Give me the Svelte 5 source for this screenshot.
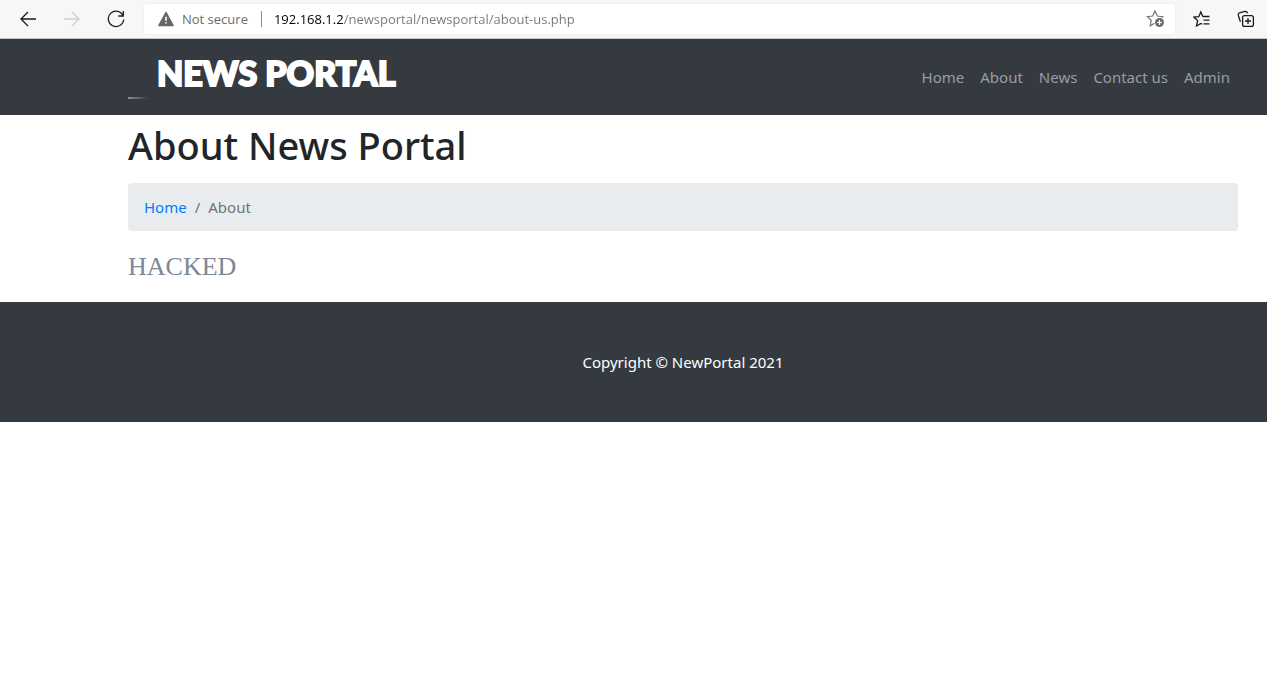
<script>
  const links = ['Home', 'About', 'News', 'Contact us', 'Admin'];
  let address = $state('192.168.1.2/newsportal/newsportal/about-us.php');
</script>

<div class="toolbar">
  <div class="history">
    <button aria-label="Back">
      <svg width="18" height="18" viewBox="0 0 18 18"><path d="M9 2 2 9l7 7M2 9h15" /></svg>
    </button>
    <button aria-label="Forward" disabled>
      <svg width="18" height="18" viewBox="0 0 18 18"><path d="m9 2 7 7-7 7M16 9H1" /></svg>
    </button>
    <button aria-label="Refresh">
      <svg width="18" height="18" viewBox="0 0 18 18"><path d="M16.2 6A7.7 7.7 0 1 0 16.7 9.5M16.3 1v5h-5" /></svg>
    </button>
  </div>
  <form class="address" onsubmit={(e) => e.preventDefault()}>
    <svg class="warning" width="16" height="16" viewBox="0 0 16 16">
      <path class="triangle" d="M8 1.2 15.2 14.5H.8Z" />
      <path class="mark" d="M8 5.8v4M8 11v1.6" />
    </svg>
    <label for="url">Not secure</label>
    <input id="url" type="text" spellcheck="false" bind:value={address} />
    <button type="button" class="favorite" aria-label="Add to favorites">
      <svg width="20" height="20" viewBox="0 0 20 20">
        <path d="m9 2 2.3 5 5.4.6-4 3.6 1 5.4L9 14l-4.8 2.8 1-5.6-4-3.6 5.5-.6Z" />
        <circle class="halo" cx="13.5" cy="13.5" r="5.4" />
        <circle class="disc" cx="13.5" cy="13.5" r="4.5" />
        <path class="plus" d="M11 13.5h5M13.5 11v5" />
      </svg>
    </button>
  </form>
  <div class="tools">
    <button aria-label="Favorites">
      <svg width="18" height="18" viewBox="0 0 18 18">
        <path d="M9.8 6.5 7.8 2 5.8 6.7l-5 .4 3.8 3.5L3.5 16l4.3-2.6 1.4.8M9.8 6.5h6.7M10.5 10.2h6M10.5 13.8h6" />
      </svg>
    </button>
    <button aria-label="Collections">
      <svg width="18" height="18" viewBox="0 0 18 18">
        <path d="M3.4 11.7 1.3 5.2Q.8 3.5 2.5 2.9L8 1.4Q9.7 1 10.6 3.3" />
        <rect x="5.6" y="5.6" width="10.8" height="10.8" rx="2" />
        <path d="M8 11h6M11 8v6" />
      </svg>
    </button>
  </div>
</div>

<nav class="navbar">
  <div class="container bar">
    <a class="brand" href="#home">NEWS PORTAL</a>
    <ul>
      {#each links as link}
        <li><a href="#{link}">{link}</a></li>
      {/each}
    </ul>
  </div>
</nav>

<main class="container">
  <h1>About News Portal</h1>
  <ol class="breadcrumb">
    <li><a href="#home">Home</a></li>
    <li>About</li>
  </ol>
  <p class="message">HACKED</p>
</main>

<footer>
  <p class="container">Copyright © NewPortal 2021</p>
</footer>

<style>
  :global(body) {
    margin: 0;
    background: #fff;
    color: #212529;
    font: 15px/24px "Noto Sans", "Open Sans", sans-serif;
  }
  button {
    display: grid;
    place-items: center;
    border: 0;
    padding: 0;
    background: none;
    color: #1b1b1b;
  }
  button:disabled {
    color: #cfcfcf;
  }
  svg {
    fill: none;
    stroke: currentColor;
    stroke-width: 1.3;
    flex: none;
  }
  .toolbar {
    display: flex;
    align-items: center;
    box-sizing: border-box;
    height: 39px;
    border-bottom: 1px solid #c2c4c5;
    background: #f7f7f7;
    font-family: "Open Sans", "Noto Sans", sans-serif;
    font-size: 13px;
  }
  .history,
  .tools {
    display: flex;
  }
  .history {
    padding-left: 6px;
  }
  .tools {
    gap: 2px;
  }
  .history button {
    width: 44px;
    height: 32px;
  }
  .tools button {
    width: 42px;
    height: 32px;
  }
  .address {
    flex: 1;
    display: flex;
    align-items: center;
    min-width: 0;
    height: 30px;
    margin: 0 6px;
    padding: 0 8px 0 14px;
    border-radius: 4px;
    background: #fff;
    box-shadow: 0 0 3px #0001;
    color: #6b6b6b;
  }
  .triangle {
    fill: #666;
    stroke: #666;
    stroke-linejoin: round;
  }
  .mark {
    stroke: #fff;
    stroke-width: 1.6;
  }
  label {
    margin-left: 8px;
    padding-right: 13px;
    border-right: 1px solid #8a8a8a;
    line-height: 16px;
    white-space: nowrap;
  }
  input {
    flex: 1;
    min-width: 0;
    border: 0;
    padding: 0;
    margin-left: 12px;
    outline: 0;
    color: transparent;
    caret-color: #000;
    font: inherit;
    background: linear-gradient(90deg, #000 69px, #767676 69px);
    -webkit-background-clip: text;
    background-clip: text;
  }
  .favorite {
    width: 22px;
    height: 24px;
    color: #767676;
  }
  .favorite svg {
    stroke-width: 1.2;
  }
  .halo {
    fill: #fff;
    stroke: none;
  }
  .disc {
    fill: #6b6b6b;
    stroke: none;
  }
  .plus {
    stroke: #fff;
  }
  .container {
    padding: 0 29px 0 128px;
  }
  .navbar,
  footer {
    background: #343a40;
  }
  .bar {
    display: flex;
    align-items: center;
    justify-content: space-between;
    height: 76px;
  }
  .brand {
    display: flex;
    align-items: center;
    box-sizing: border-box;
    height: 52px;
    padding: 0 0 8px 29px;
    background: linear-gradient(90deg, #8d9093, transparent) 0 46px / 20px 2px no-repeat;
    color: #fff;
    font: 900 34px/40px Lato, sans-serif;
    -webkit-text-stroke: 2px #fff;
    text-decoration: none;
    white-space: nowrap;
  }
  ul,
  ol {
    display: flex;
    list-style: none;
    margin: 0;
    padding: 0;
  }
  ul a {
    display: block;
    padding: 8px;
    color: #9a9da0;
    text-decoration: none;
    white-space: nowrap;
  }
  h1 {
    margin: 0;
    padding: 6px 0 14px;
    font-size: 38px;
    line-height: 48px;
    font-weight: 500;
  }
  .breadcrumb {
    padding: 12px 16px;
    border-radius: 4px;
    background: #e9ecef;
    color: #6c757d;
  }
  .breadcrumb a {
    color: #007bff;
    text-decoration: none;
  }
  .breadcrumb li + li::before {
    content: "/";
    padding: 0 8px;
  }
  .message {
    margin: 0;
    padding: 16px 0;
    color: #7b8898;
    font: 26px/39px "Liberation Serif", serif;
  }
  footer {
    padding: 48px 0;
  }
  footer p {
    margin: 0;
    color: #fff;
    text-align: center;
  }
</style>
